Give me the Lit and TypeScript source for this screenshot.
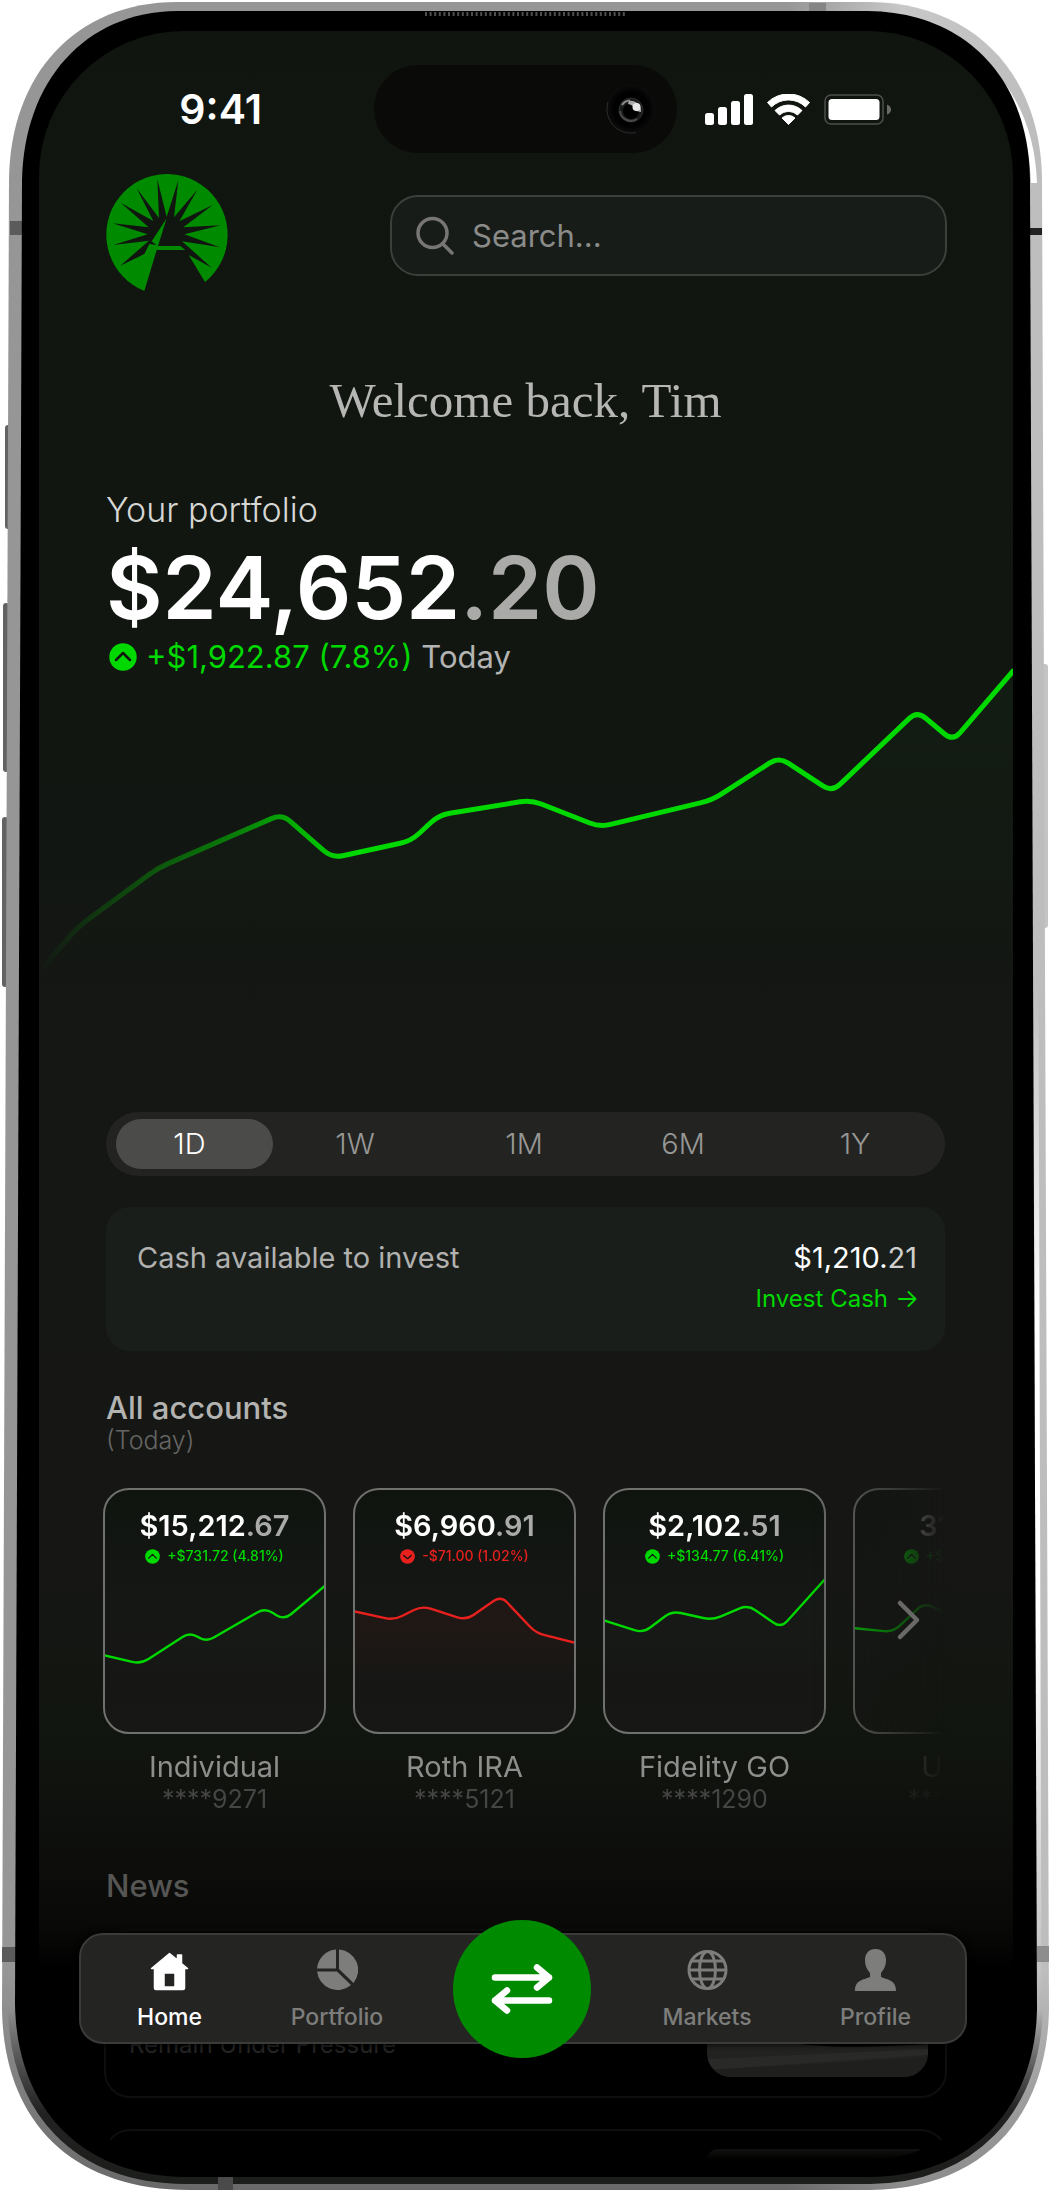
import { LitElement, html, svg, css } from "lit";
import { customElement, property, state } from "lit/decorators.js";
import { classMap } from "lit/directives/class-map.js";

type Point = [number, number];

/** Builds a polyline path whose inner corners are rounded by `radius`. */
function softPath(points: Point[], radius: number): string {
  const toward = (from: Point, to: Point): Point => {
    const length = Math.hypot(to[0] - from[0], to[1] - from[1]);
    const t = Math.min(radius / length, 0.5);
    return [from[0] + (to[0] - from[0]) * t, from[1] + (to[1] - from[1]) * t];
  };
  let d = `M${points[0].join(" ")}`;
  for (let i = 1; i < points.length - 1; i++) {
    const a = toward(points[i], points[i - 1]);
    const b = toward(points[i], points[i + 1]);
    d += `L${a.join(" ")}Q${points[i].join(" ")} ${b.join(" ")}`;
  }
  return d + `L${points[points.length - 1].join(" ")}`;
}

interface Account {
  name: string;
  digits: string;
  whole: string;
  cents: string;
  change: string;
  down?: boolean;
  points: Point[];
}

const ACCOUNTS: Account[] = [
  {
    name: "Individual", digits: "****9271", whole: "$15,212", cents: ".67", change: "+$731.72 (4.81%)",
    points: [[0, 167], [38, 176], [87, 144], [103, 154], [162, 120], [181, 132], [223, 97]],
  },
  {
    name: "Roth IRA", digits: "****5121", whole: "$6,960", cents: ".91", change: "-$71.00 (1.02%)", down: true,
    points: [[0, 123], [41, 132], [69, 118], [113, 132], [148, 108], [183, 145], [223, 155]],
  },
  {
    name: "Fidelity GO", digits: "****1290", whole: "$2,102", cents: ".51", change: "+$134.77 (6.41%)",
    points: [[0, 132], [40, 145], [69, 123], [109, 132], [145, 117], [178, 140], [223, 90]],
  },
  {
    name: "UTMA", digits: "****3804", whole: "311", cents: ".40", change: "+$4.12 (1.32%)",
    points: [[0, 140], [40, 144], [71, 115], [110, 132], [223, 100]],
  },
];

const PORTFOLIO: Point[] = [
  [2, 292], [40, 249], [119, 191], [243, 137], [293, 181], [372, 164], [400, 138], [492, 123],
  [561, 150], [673, 123], [740, 80], [793, 115], [878, 34], [914, 64], [975, -7],
];

@customElement("trend-badge")
export class TrendBadge extends LitElement {
  @property({ type: Boolean }) down = false;
  static styles = css`
    :host { display: block; flex: none; width: 28px; height: 28px; color: #00d900; }
    :host([down]) { color: #e8201e; }
    svg { display: block; width: 100%; height: 100%; }
    .mark { fill: none; stroke: #10150f; stroke-width: 2.5; stroke-linecap: round; stroke-linejoin: round; }
  `;
  render() {
    return html`<svg viewBox="0 0 28 28" aria-hidden="true">
      <circle cx="14" cy="14" r="13.7" fill="currentColor" />
      <path class="mark" d=${this.down ? "M7 12L14 18L21 12" : "M7 17L14 10L21 17"} />
    </svg>`;
  }
}

@customElement("account-tile")
export class AccountTile extends LitElement {
  @property({ attribute: false }) account!: Account;
  static styles = css`
    :host { display: block; flex: 0 0 223px; min-width: 0; text-align: center; }
    .tile { color: inherit; text-decoration: none; display: block; }
    .card {
      display: grid; height: 246px; box-sizing: border-box; border: 2px solid #70706e;
      border-radius: 26px; overflow: hidden;
      background: linear-gradient(#0f140f, #151714 45%, #171715);
    }
    .spark { grid-area: 1 / 1; width: 100%; height: 242px; display: block; }
    .figures { grid-area: 1 / 1; padding-top: 18px; }
    .line { fill: none; stroke: #00d900; stroke-width: 2.4; }
    .line.down { stroke: #e8201e; }
    .value { font-size: 29px; line-height: 36px; font-weight: 600; color: #fff; white-space: nowrap; }
    .cents { color: #aaaaa8; }
    .change {
      display: flex; align-items: center; justify-content: center; gap: 7px; margin-top: 2px;
      font-size: 14px; line-height: 20px; font-weight: 500; color: #00d900; white-space: nowrap;
    }
    .change.down { color: #e8201e; }
    trend-badge { width: 15px; height: 15px; }
    .name { margin-top: 15px; font-size: 29px; line-height: 36px; color: #8e8e8c; }
    .digits { font-size: 25px; line-height: 28px; color: #454543; }
  `;
  render() {
    const a = this.account;
    const d = softPath(a.points, 9);
    const tint = a.down ? "#e8201e" : "#2c4a3a";
    const tone = classMap({ down: !!a.down });
    return html`<a class="tile" href="#account">
      <div class="card">
        <svg class="spark" viewBox="2 2 219 242" preserveAspectRatio="none" aria-hidden="true">
          <defs><linearGradient id="g" x1="0" y1="100" x2="0" y2="195" gradientUnits="userSpaceOnUse">
            <stop offset="0" stop-color=${tint} stop-opacity=".06" />
            <stop offset=".5" stop-color=${tint} stop-opacity=".04" />
            <stop offset="1" stop-color=${tint} stop-opacity="0" />
          </linearGradient></defs>
          <path d="${d}V246H0Z" fill="url(#g)" />
          <path class="line ${tone}" d=${d} />
        </svg>
        <div class="figures">
          <div class="value">${a.whole}<span class="cents">${a.cents}</span></div>
          <div class="change ${tone}"><trend-badge ?down=${a.down}></trend-badge>${a.change}</div>
        </div>
      </div>
      <div class="name">${a.name}</div>
      <div class="digits">${a.digits}</div>
    </a>`;
  }
}

/** Metal body, side buttons and black bezel of the handset. */
@customElement("phone-body")
export class PhoneBody extends LitElement {
  static styles = css`
    :host { display: block; }
    svg { display: block; width: 100%; height: 100%; }
  `;
  render() {
    const slots = Array.from({ length: 44 }, (_, i) => 425 + i * 4.6);
    return html`<svg viewBox="0 0 1051 2191" preserveAspectRatio="none" aria-hidden="true">
      <defs>
        <linearGradient id="metal" x1="0" x2="1" y1="0" y2="0">
          <stop offset="0" stop-color="#969696" /><stop offset=".75" stop-color="#969696" />
          <stop offset=".86" stop-color="#c8c8c8" /><stop offset="1" stop-color="#bdbdbd" />
        </linearGradient>
        <linearGradient id="shade" x1="0" x2="0" y1="0" y2="1">
          <stop offset="0" stop-color="#000" stop-opacity="0" /><stop offset=".9" stop-color="#000" stop-opacity="0" />
          <stop offset="1" stop-color="#000" stop-opacity=".3" />
        </linearGradient>
        <linearGradient id="gleam" x1="0" x2="0" y1="0" y2="1">
          <stop offset="0" stop-color="#fff" stop-opacity="0" /><stop offset=".4" stop-color="#fff" stop-opacity="0" />
          <stop offset=".6" stop-color="#fff" /><stop offset=".78" stop-color="#fff" />
          <stop offset="1" stop-color="#fff" stop-opacity="0" />
        </linearGradient>
        <linearGradient id="rim" x1="0" x2="0" y1="2010" y2="2180" gradientUnits="userSpaceOnUse">
          <stop offset="0" stop-color="#222" stop-opacity="0" /><stop offset=".6" stop-color="#222" />
          <stop offset="1" stop-color="#1c1e1b" />
        </linearGradient>
      </defs>
      <g fill="#636363">
        <rect x="5" y="425" width="6" height="104" rx="3" />
        <rect x="3" y="603" width="6" height="169" rx="3" />
        <rect x="2" y="817" width="6" height="170" rx="3" />
      </g>
      <rect x="1040" y="664" width="8" height="264" rx="3" fill="#c4c4c4" />
      <path fill="url(#metal)" d="M177 2H870C970 3 1041 70 1042 180L1049 2010C1047 2115 985 2189 870 2190H190C70 2190 4 2120 2 2010L9 180C10 75 75 2 177 2Z" />
      <path fill="url(#shade)" d="M177 2H870C970 3 1041 70 1042 180L1049 2010C1047 2115 985 2189 870 2190H190C70 2190 4 2120 2 2010L9 180C10 75 75 2 177 2Z" />
      <path fill="none" stroke="#fff" stroke-width="6" d="M920 25C985 50 1031 100 1034 183" />
      <path fill="none" stroke="url(#gleam)" stroke-width="5" d="M1034 300L1039 2000L1040 2001" />
      <g fill="#5b5b5b">
        <rect x="10" y="221" width="13" height="14" /><rect x="2" y="1947" width="14" height="15" />
        <rect x="1030" y="228" width="12" height="7" fill="#222" />
        <rect x="1037" y="1946" width="12" height="16" fill="#8d8d8d" />
        <rect x="809" y="3" width="17" height="9" fill="#858585" />
      </g>
      <path fill="none" stroke="url(#rim)" stroke-width="14" d="M15 2008C17 2110 78 2176 185 2177H870C970 2176 1033 2110 1036 2008" />
      <rect x="218" y="2177" width="15" height="13" fill="#4a4a4a" />
      <path fill="#000" d="M177 11H868C962 12 1029 75 1030 180L1037 2010C1035 2105 975 2176 870 2177H185C83 2176 17 2110 15 2005L22 180C24 82 84 12 177 11Z" />
      ${slots.map((x) => svg`<rect x=${x} y="12" width="2" height="4" fill="#4c4f4b" />`)}
    </svg>`;
  }
}

@customElement("app-root")
export class AppRoot extends LitElement {
  @state() private range = "1D";

  static styles = css`
    :host { display: block; background: #fff; font-family: Inter, "Liberation Sans", sans-serif; }
    .phone { position: relative; padding: 31px 38px 31px 39px; }
    phone-body { position: absolute; inset: 0; }
    .screen {
      position: relative; overflow: hidden; padding: 34px 68px 0 67px; border-radius: 145px;
      background: linear-gradient(#10150f, #111611 30%, #151714 52%, #161715 72%, #11150f 80%, #0d0e0c 86%, #090908 89%, #000 91%);
    }
    button { font: inherit; border: 0; padding: 0; background: none; cursor: pointer; }
    h1, h2, p { margin: 0; }

    .status { display: grid; grid-template-columns: 1fr 303px 1fr; align-items: center; margin: 0 -67px; }
    .clock { justify-self: end; padding-right: 112px; font-size: 41px; line-height: 48px; font-weight: 600; color: #fff; }
    .island { display: flex; justify-content: flex-end; align-items: center; height: 88px; padding-right: 21px; box-sizing: border-box; border-radius: 44px; background: #0a0a08; }
    .camera { width: 50px; height: 50px; }
    .signals { display: flex; align-items: center; gap: 14px; padding-left: 28px; }
    .signals svg { display: block; }

    .head { display: flex; align-items: center; justify-content: space-between; height: 124px; margin-top: 20px; }
    .logo { display: block; width: 122px; height: 124px; }
    .search {
      flex: 0 1 557px; min-width: 0; display: flex; align-items: center; gap: 18px; height: 81px; padding: 2px 24px 0; margin-right: -2px;
      box-sizing: border-box; border: 2px solid #3c3f3c; border-radius: 28px; background: #181c19;
    }
    .search svg { flex: none; width: 38px; height: 40px; }
    .search input { flex: 1; min-width: 0; width: 100%; border: 0; outline: 0; padding: 0; background: none; font: inherit; font-size: 31px; line-height: 40px; color: #ccc; }
    .search input::placeholder { color: #8b8b89; opacity: 1; }

    .welcome { margin-top: 76px; text-align: center; font: 400 49px/56px "Liberation Serif", serif; color: #b6b6b4; }
    .caption { margin-top: 61px; font-size: 34px; line-height: 40px; font-weight: 300; color: #d6d6d4; }
    .balance { margin-top: 10px; font-size: 87px; line-height: 96px; font-weight: 600; color: #fff; white-space: nowrap; }
    .balance .cents { color: #aaaaa8; }
    .delta { display: flex; align-items: center; gap: 9px; margin-top: 1px; padding-left: 3px; font-size: 31px; line-height: 40px; color: #00d900; white-space: nowrap; }
    .delta .when { color: #b4b4b2; }

    .chart { display: block; width: calc(100% + 135px); height: 435px; margin: 0 -68px 0 -67px; overflow: visible; }

    .ranges { display: grid; grid-template-columns: 157fr 164fr 174fr 144fr 190fr; height: 64px; padding: 7px 0 7px 10px; box-sizing: border-box; border-radius: 32px; background: #232422; }
    .range { border-radius: 25px; font-size: 29px; line-height: 36px; font-weight: 300; color: #979795; }
    .range:first-child { padding-right: 10px; }
    .range:last-child { padding-left: 10px; }
    .range.on { background: #4b4c4a; color: #fff; }

    .cash { display: flex; justify-content: space-between; align-items: flex-start; margin-top: 31px; padding: 33px 28px 36px 31px; border-radius: 24px; background: #1a1e1b; font-size: 29px; line-height: 36px; color: #b1b1af; }
    .sum { display: flex; flex-direction: column; align-items: flex-end; gap: 7px; color: #fff; }
    .sum .cents { color: #cfcfcd; }
    .invest { display: flex; align-items: center; gap: 10px; font-size: 24px; line-height: 32px; color: #00d900; text-decoration: none; }

    .title { font-size: 31px; line-height: 36px; font-weight: 500; color: #b3b3b1; }
    .accounts { margin-top: 39px; }
    .period { font-size: 25px; line-height: 28px; font-weight: 300; color: #656563; }
    .rail { position: relative; margin: 34px 0 0 -3px; }
    .strip { display: flex; gap: 27px; overflow: hidden; -webkit-mask-image: linear-gradient(90deg, #000 84%, rgba(0, 0, 0, 0.2) 97%, transparent); mask-image: linear-gradient(90deg, #000 84%, rgba(0, 0, 0, 0.2) 97%, transparent); }
    .next { position: absolute; top: 108px; right: 22px; width: 30px; height: 48px; }
    .next svg { display: block; }

    .news { margin-top: 55px; }
    .news .title { color: #565654; }
    .story { display: flex; justify-content: space-between; align-items: flex-end; height: 169px; margin: 25px -2px 0; padding: 0 17px 19px 23px; box-sizing: border-box; border: 2px solid #0d0e0d; border-radius: 26px; color: #242424; text-decoration: none; }
    .headline { margin-bottom: 16px; font-size: 24px; line-height: 32px; }
    .thumb { width: 221px; height: 120px; border-radius: 24px; }
    .peek { height: 31px; margin-top: 31px; padding-top: 18px; border-bottom: 0; border-radius: 26px 26px 0 0; padding-bottom: 0; overflow: hidden; }
    .peek .edge { width: 221px; height: 11px; border-radius: 24px 24px 0 0; background: linear-gradient(#11110f, #000); }

    .nav {
      position: absolute; left: 79px; right: 84px; bottom: 147px; display: grid; align-items: center;
      grid-template-columns: 177fr 158fr 212fr 158fr 179fr; height: 111px; box-sizing: border-box;
      border: 2px solid #3a3c3a; border-radius: 24px; background: #242523; box-shadow: 0 0 6px #000;
    }
    .item { display: flex; flex-direction: column; align-items: center; gap: 12px; color: #7d7d7b; text-decoration: none; font-size: 23px; line-height: 28px; font-weight: 500; }
    .item svg { display: block; width: 41px; height: 42px; }
    .item.on { color: #fff; }
    .swap { justify-self: center; display: grid; place-items: center; width: 138px; height: 138px; margin: -15px 0 -13px; border-radius: 50%; background: #008a00; }
  `;

  private chart() {
    const d = softPath(PORTFOLIO, 11);
    return html`<svg class="chart" viewBox="0 0 974 435" preserveAspectRatio="none" role="img" aria-label="Portfolio value">
      <defs>
        <linearGradient id="trace" x1="0" x2="973" y1="0" y2="0" gradientUnits="userSpaceOnUse">
          <stop offset="0" stop-color="#00d900" stop-opacity="0" />
          <stop offset=".08" stop-color="#00d900" stop-opacity=".22" />
          <stop offset=".2" stop-color="#00d900" stop-opacity=".52" />
          <stop offset=".32" stop-color="#00d900" />
        </linearGradient>
        <linearGradient id="wash" x1="0" x2="0" y1="0" y2="300" gradientUnits="userSpaceOnUse">
          <stop offset="0" stop-color="#1d6a20" stop-opacity=".08" />
          <stop offset="1" stop-color="#1d6a20" stop-opacity="0" />
        </linearGradient>
      </defs>
      <path d="${d}V435H0Z" fill="url(#wash)" />
      <path d=${d} fill="none" stroke="url(#trace)" stroke-width="5" />
    </svg>`;
  }

  render() {
    return html`<div class="phone">
      <phone-body></phone-body>
      <main class="screen">
        <div class="status">
          <span class="clock">9:41</span>
          <div class="island">
            <svg class="camera" viewBox="0 0 50 50" aria-hidden="true">
              <defs><radialGradient id="lens"><stop offset="0" stop-color="#000" /><stop offset=".7" stop-color="#010101" /><stop offset="1" stop-color="#0c0d0c" /></radialGradient></defs>
              <circle cx="25" cy="25" r="24.5" fill="url(#lens)" />
              <path d="M2 18A24 24 0 0 0 30 48.500" fill="none" stroke="#2c302d" stroke-width="1" />
              <circle cx="25" cy="26" r="12" fill="#191b1a" stroke="#2c2e2d" />
              <path d="M14 27A11 11 0 0 0 31 35" fill="none" stroke="#484a49" stroke-width="2" />
              <path d="M16 21A10 10 0 0 1 24 16.500" fill="none" stroke="#8a8a8a" stroke-width="2" />
              <circle cx="25" cy="27" r="8" fill="#000" />
              <path d="M23 17A10 10 0 0 1 35 28L30 27Q28 21 22 20Z" fill="#a9a9a9" />
              <circle cx="30.500" cy="23" r="4" fill="#e6e6e6" />
            </svg>
          </div>
          <div class="signals">
            <svg width="48" height="31" viewBox="0 0 48 31" fill="#fff" aria-label="Signal"><rect y="19" width="9" height="12" rx="2.5" /><rect x="13" y="13" width="9" height="18" rx="2.5" /><rect x="26" y="7" width="9" height="24" rx="2.5" /><rect x="39" y="0" width="9" height="31" rx="2.5" /></svg>
            <svg width="43" height="31" viewBox="0 0 43 31" fill="#fff" aria-label="Wi-Fi">
              <path d="M.5 8.5A30 30 0 0 1 42.500 8.500L38.500 13A24 24 0 0 0 4.500 13Z" stroke="#fff" stroke-linejoin="round" />
              <path d="M8 16.500A19.500 19.500 0 0 1 35 16.500L30.500 21A13 13 0 0 0 12.500 21Z" stroke="#fff" stroke-linejoin="round" />
              <path d="M15 24A9.500 9.500 0 0 1 28 24L21.500 30.500Z" stroke="#fff" stroke-linejoin="round" />
            </svg>
            <svg width="68" height="31" viewBox="0 0 68 31" aria-label="Battery"><rect x="1" y="1" width="58" height="29" rx="6" fill="none" stroke="#4c4f4b" stroke-width="1.500" /><rect x="4.500" y="5" width="51" height="21" rx="3.500" fill="#fff" /><path d="M63 10.500Q67 12 67 15.500T63 20.500Z" fill="#6a6b69" /></svg>
          </div>
        </div>

        <header class="head">
          <svg class="logo" viewBox="315 519 366 372" role="img" aria-label="Home">
            <path fill="#008a00" d="M430 873A182 182 0 1 1 612 846L563 765L632 803L543 724L657 742L550 703L659 676L547 682L635 615L535 664L589 569L519 652L532 541L497 651L469 538L474 654L407 565L457 663L360 609L443 682L335 670L440 703L337 735L444 722L358 797L430 762L445 732L466 735L452 724L497 655L471 738H538L553 750H467Z" />
          </svg>
          <label class="search">
            <svg viewBox="0 0 38 40" fill="none" stroke="#777674" stroke-width="3.500" stroke-linecap="round" aria-hidden="true"><circle cx="16.500" cy="17" r="14.500" /><path d="M27 28L36 37" /></svg>
            <input type="search" placeholder="Search..." aria-label="Search" />
          </label>
        </header>

        <h1 class="welcome">Welcome back, Tim</h1>
        <p class="caption">Your portfolio</p>
        <div class="balance">$24,652<span class="cents">.20</span></div>
        <div class="delta"><trend-badge></trend-badge><span>+$1,922.87 (7.8%) <span class="when">Today</span></span></div>
        ${this.chart()}

        <div class="ranges" role="group" aria-label="Period">
          ${["1D", "1W", "1M", "6M", "1Y"].map((r) => html`<button
            class=${classMap({ range: true, on: r === this.range })}
            aria-pressed=${r === this.range} @click=${() => (this.range = r)}>${r}</button>`)}
        </div>

        <section class="cash">
          <span>Cash available to invest</span>
          <div class="sum">
            <span>$1,210.<span class="cents">21</span></span>
            <a class="invest" href="#invest">Invest Cash
              <svg width="19" height="18" viewBox="0 0 19 18" fill="none" stroke="currentColor" stroke-width="2" stroke-linecap="round" stroke-linejoin="round" aria-hidden="true"><path d="M1 9H17M10.500 2L17.500 9L10.500 16" /></svg>
            </a>
          </div>
        </section>

        <section class="accounts">
          <h2 class="title">All accounts</h2>
          <p class="period">(Today)</p>
          <div class="rail">
            <div class="strip">${ACCOUNTS.map((a) => html`<account-tile .account=${a}></account-tile>`)}</div>
            <button class="next" aria-label="More accounts">
              <svg width="30" height="48" viewBox="0 0 30 48" fill="none" stroke="#6b6968" stroke-width="4.500" stroke-linecap="round" stroke-linejoin="round"><path d="M7 7L24 24L7 41" /></svg>
            </button>
          </div>
        </section>

        <section class="news">
          <h2 class="title">News</h2>
          <a class="story" href="#story">
            <span class="headline">Remain Under Pressure</span>
            <svg class="thumb" viewBox="0 0 221 120" preserveAspectRatio="none" aria-hidden="true">
              <rect width="221" height="120" fill="#222221" />
              <path d="M0 102L221 92V98L0 113Z" fill="#292928" /><path d="M0 113L221 101V120H0Z" fill="#1f1f1e" />
              <path d="M88 86Q130 93 221 87V80H88Z" fill="#000" />
            </svg>
          </a>
          <div class="story peek"><span></span><span class="edge"></span></div>
        </section>
      </main>

      <nav class="nav" aria-label="Main">
        <a class="item on" href="#home">
          <svg viewBox="0 0 41 42" aria-hidden="true"><path fill="currentColor" stroke="currentColor" stroke-width="1.500" stroke-linejoin="round" fill-rule="evenodd" d="M20.500 4.500L28.500 11V6H32.500V14.500L38.500 19.500H35.500V39Q35.500 40.500 34 40.500H7Q5.500 40.500 5.500 39V19.500H2.500ZM15 24V38H26V24Z" /></svg>Home
        </a>
        <a class="item" href="#portfolio">
          <svg viewBox="0 0 41 42" fill="currentColor" aria-hidden="true"><path d="M19 .5V19.500H.1A20.500 20.500 0 0 1 19 .5ZM22 .5A20.500 20.500 0 0 1 36.500 34L22 20ZM.1 22.500H20L34 36A20.500 20.500 0 0 1 .1 22.500Z" /></svg>Portfolio
        </a>
        <button class="swap" aria-label="Transfer">
          <svg width="62" height="50" viewBox="0 0 62 50" fill="none" stroke="#fff" stroke-width="6.500" stroke-linecap="round" stroke-linejoin="round"><path d="M4 13.500H58M46 3.500L58 13.500L46 23.500M58 36.500H4M16 26.500L4 36.500L16 46.500" /></svg>
        </button>
        <a class="item" href="#markets">
          <svg viewBox="0 0 41 42" fill="none" stroke="currentColor" stroke-width="3" aria-hidden="true"><circle cx="20.500" cy="21" r="18.500" /><ellipse cx="20.500" cy="21" rx="8" ry="18.500" /><path d="M2 21H39M4.500 12H36.500M4.500 30H36.500" /></svg>Markets
        </a>
        <a class="item" href="#profile">
          <svg viewBox="0 0 41 42" fill="currentColor" aria-hidden="true"><path d="M20.500 0C27 0 31 4.500 31 11C31 17 28.500 21 26 24V28C33 31 41 31 41 42H0C0 31 8 31 15 28V24C12.500 21 10 17 10 11C10 4.500 14 0 20.500 0Z" /></svg>Profile
        </a>
      </nav>
    </div>`;
  }
}
